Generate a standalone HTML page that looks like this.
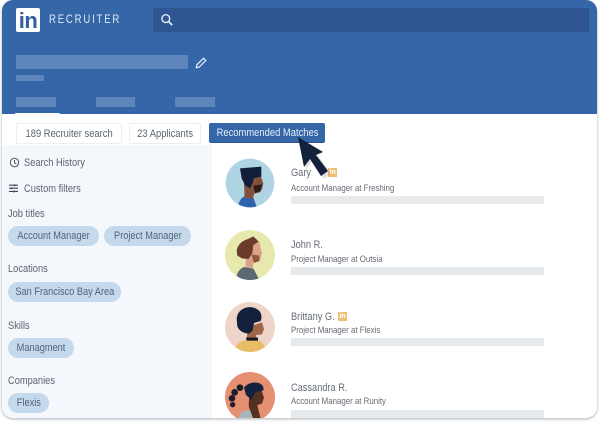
<!DOCTYPE html>
<html><head><meta charset="utf-8">
<style>
html,body{margin:0;padding:0;background:#fff}
body{width:600px;height:422px;position:relative;overflow:hidden;font-family:"Liberation Sans",sans-serif;color:#56606b}
.card{position:absolute;left:2px;top:0;width:595px;height:418px;border-radius:11px;overflow:hidden;background:#fff;box-shadow:0 1px 2px .5px rgba(90,100,115,.4)}
.a{position:absolute;white-space:nowrap}
.hd{position:absolute;left:0;top:0;width:595px;height:114px;background:#3566a8}
.ph{position:absolute;background:#5f86bb}
.btn{position:absolute;height:19px;line-height:20px;text-align:center;font-size:10.8px;background:#fff;border:1px solid #eceef0;border-radius:2px;color:#5b6570;white-space:nowrap}
.t{display:inline-block;transform:scaleX(.87);transform-origin:center}
.side{position:absolute;left:0;top:145px;width:210px;height:273px;background:#f4f7fc}
.chip{position:absolute;height:20px;line-height:21px;border-radius:10px;background:#c4d9ec;font-size:10.6px;text-align:center;color:#4f6478;white-space:nowrap}
.lb{position:absolute;font-size:10.8px;white-space:nowrap;color:#5c656f;transform:scaleX(.86);transform-origin:left}
.nm{position:absolute;left:289px;font-size:11px;white-space:nowrap;color:#666d75;transform:scaleX(.84);transform-origin:left}
.sb{position:absolute;left:289px;font-size:9.4px;white-space:nowrap;color:#666d75;transform:scaleX(.84);transform-origin:left}
.bar{position:absolute;left:289px;width:253px;height:8px;background:#e7eaed}
.li{position:absolute;width:9px;height:9px;background:#edc078;color:#fff;font-size:7px;font-weight:bold;line-height:9px;text-align:center}
</style></head>
<body>
<div class="card">
  <div class="hd"></div>
  <div class="a" style="left:14px;top:8px;width:24px;height:24px;background:#fff;border-radius:2px;color:#2f5f9f;font-weight:bold;font-size:22px;line-height:26px;text-align:center;letter-spacing:-.5px">in</div>
  <div class="a" style="left:47px;top:13px;color:#e3ecf6;font-size:11.5px;letter-spacing:2.2px;line-height:14px;transform:scaleX(.83);transform-origin:left">RECRUITER</div>
  <div class="a" style="left:151px;top:8px;width:436px;height:24px;background:#2f5592"></div>
  <svg class="a" style="left:158px;top:13px" width="14" height="14" viewBox="0 0 14 14"><circle cx="5.8" cy="5.6" r="3.9" fill="none" stroke="#e6eef7" stroke-width="1.4"/><path d="M8.6 8.5L12.2 12.2" stroke="#e6eef7" stroke-width="1.7"/></svg>
  <div class="ph" style="left:14px;top:55px;width:172px;height:14px"></div>
  <svg class="a" style="left:192px;top:56px" width="14" height="14" viewBox="0 0 14 14"><path d="M2.2 11.8L3 8.7 9.6 2.2 11.8 4.4 5.3 11z" fill="#3566a8" stroke="#e8f0f8" stroke-width="1.2" stroke-linejoin="round"/></svg>
  <div class="ph" style="left:14px;top:75px;width:28px;height:6px"></div>
  <div class="ph" style="left:14px;top:97px;width:40px;height:10px"></div>
  <div class="ph" style="left:94px;top:97px;width:39px;height:10px"></div>
  <div class="ph" style="left:173px;top:97px;width:40px;height:10px"></div>
  <div class="a" style="left:13px;top:113px;width:45px;height:2px;background:#fff;border-radius:1px"></div>

  <div class="btn" style="left:14px;top:123px;width:104px"><span class="t">189 Recruiter search</span></div>
  <div class="btn" style="left:127px;top:123px;width:70px"><span class="t">23 Applicants</span></div>
  <div class="btn" style="left:207px;top:123px;width:116px;background:#3566a8;border:0;height:19px;color:#e6eef7;border-bottom:1px solid #2b5592"><span class="t">Recommended Matches</span></div>

  <div class="side"></div>
  <svg class="a" style="left:7px;top:157px" width="11" height="11" viewBox="0 0 11 11"><circle cx="5.5" cy="5.5" r="4.2" fill="none" stroke="#4d5660" stroke-width="1"/><path d="M5.5 3v2.8L7.5 7" fill="none" stroke="#4d5660" stroke-width="1"/></svg>
  <div class="lb" style="left:21.5px;top:156.5px">Search History</div>
  <svg class="a" style="left:7px;top:184px" width="10" height="9" viewBox="0 0 10 9"><path d="M0 1.2h9M0 4.2h9M0 7.4h9" stroke="#3f4750" stroke-width="1.1"/><path d="M5.5 .4v1.8M2.5 3.4v1.8M5 6.6v1.8" stroke="#3f4750" stroke-width="1.4"/></svg>
  <div class="lb" style="left:21.5px;top:182.5px">Custom filters</div>
  <div class="lb" style="left:6px;top:207.5px">Job titles</div>
  <div class="chip" style="left:6px;top:226px;width:91px"><span class="t">Account Manager</span></div>
  <div class="chip" style="left:102px;top:226px;width:87px"><span class="t">Project Manager</span></div>
  <div class="lb" style="left:6px;top:262.5px">Locations</div>
  <div class="chip" style="left:6px;top:282px;width:113px"><span class="t">San Francisco Bay Area</span></div>
  <div class="lb" style="left:6px;top:319.5px">Skills</div>
  <div class="chip" style="left:6px;top:338px;width:66px"><span class="t">Managment</span></div>
  <div class="lb" style="left:6px;top:374.5px">Companies</div>
  <div class="chip" style="left:6px;top:393px;width:41px"><span class="t">Flexis</span></div>

  <svg class="a" style="left:218px;top:155px" width="60" height="263" viewBox="0 0 60 263">
    <defs><clipPath id="c"><circle cx="90" cy="84" r="73"/></clipPath>
    <clipPath id="d"><circle cx="90" cy="90" r="75"/></clipPath></defs>
    <!-- Gary -->
    <g transform="scale(.3333)">
      <circle cx="90" cy="84" r="73" fill="#afd4e4"/>
      <g clip-path="url(#c)">
        <path d="M52 160Q58 128 78 122L100 128 112 160z" fill="#2f64ad"/>
        <path d="M72 85L122 62 130 85 127 100 120 112 103 116 98 132 74 128z" fill="#84523a"/>
        <path d="M60 40L124 35 124 65 102 70 98 84 90 100 76 92 65 70z" fill="#131f38"/>
        <path d="M100 92L126 88 122 108 105 114z" fill="#2a1d1c"/>
      </g>
    </g>
    <!-- John -->
    <g transform="translate(0,70) scale(.3333)">
      <circle cx="90" cy="90" r="75" fill="#e7e8ad"/>
      <g clip-path="url(#d)">
        <path d="M48 165Q50 135 72 126L100 130 118 165z" fill="#5c6872"/>
        <path d="M78 98L92 60 118 50 126 85 120 108 100 114 98 132 76 124z" fill="#dba48a"/>
        <path d="M94 88L118 92 118 108 102 114z" fill="#94583f"/>
        <path d="M50 76Q56 50 84 42L100 34 116 50 100 60 97 84 86 102 66 100 52 92z" fill="#6b3b28"/>
      </g>
    </g>
    <!-- Brittany -->
    <g transform="translate(0,142) scale(.3333)">
      <circle cx="90" cy="90" r="75" fill="#efd4ca"/>
      <g clip-path="url(#d)">
        <path d="M40 165Q48 134 76 130H114Q134 136 140 165z" fill="#e9bd66"/>
        <path d="M84 90L126 76 132 96 126 112 108 114 110 126 80 126z" fill="#a0664a"/>
        <path d="M50 66Q52 40 78 32 104 26 120 44 128 58 122 72L102 78 98 100 88 110Q60 108 52 88z" fill="#14213d"/>
        <path d="M78 122H114V131H80z" fill="#17181f"/>
      </g>
    </g>
    <!-- Cassandra -->
    <g transform="translate(0,212) scale(.3333)">
      <circle cx="90" cy="90" r="75" fill="#e58f73"/>
      <g clip-path="url(#d)">
        <path d="M48 165L66 134 98 126 122 165z" fill="#a8b5ba"/>
        <path d="M88 78L124 68 132 92 126 110 112 114 122 156 100 156 86 118z" fill="#53301f"/>
        <path d="M72 62Q88 42 116 48 134 54 130 70L106 76 94 98 78 84z" fill="#14223f"/>
        <g fill="#1c1c2a"><circle cx="60" cy="62" r="10"/><circle cx="44" cy="76" r="10"/><circle cx="36" cy="94" r="10"/><circle cx="38" cy="113" r="8"/></g>
      </g>
    </g>
  </svg>

  <div class="nm" style="top:167px">Gary</div>
  <div class="li" style="left:326px;top:168px">in</div>
  <div class="sb" style="top:182px">Account Manager at Freshing</div>
  <div class="bar" style="top:196px"></div>

  <div class="nm" style="top:239px">John R.</div>
  <div class="sb" style="top:253px">Project Manager at Outsia</div>
  <div class="bar" style="top:267px"></div>

  <div class="nm" style="top:311px">Brittany G.</div>
  <div class="li" style="left:336px;top:312px">in</div>
  <div class="sb" style="top:324px">Project Manager at Flexis</div>
  <div class="bar" style="top:338px"></div>

  <div class="nm" style="top:382px">Cassandra R.</div>
  <div class="sb" style="top:395px">Account Manager at Runity</div>
  <div class="bar" style="top:410px"></div>
</div>
<svg class="a" style="left:0;top:0" width="600" height="422" viewBox="0 0 600 422">
  <path d="M306 170L312 161 324 179 331 174 319 157 305 150z" fill="#000" opacity=".12"/>
  <path d="M298 137L304 167 310 159 321 176 328 171 316 155 323 152z" fill="#14213d"/>
</svg>
</body></html>
